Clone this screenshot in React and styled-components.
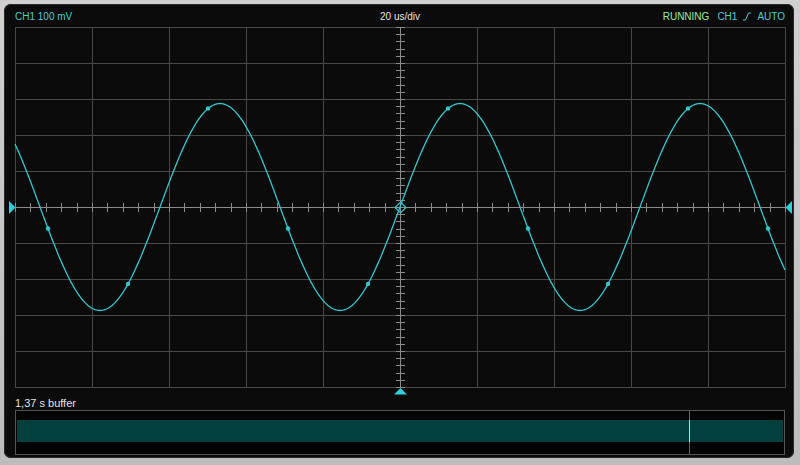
import React from 'react';
import styled, { createGlobalStyle } from 'styled-components';

const GlobalStyle = createGlobalStyle`
  html, body {
    margin: 0;
    padding: 0;
    background: #c4c4c4;
  }
  * { box-sizing: border-box; }
`;

const Frame = styled.div`
  width: 800px;
  height: 465px;
  padding: 4px 6px 7px 4px;
  background: linear-gradient(#d0d0d0, #bcbcbc);
  font-family: 'Liberation Sans', Arial, sans-serif;
`;

const Panel = styled.div`
  height: 100%;
  display: flex;
  flex-direction: column;
  background: #0b0b0b;
  border-radius: 7px;
  box-shadow: inset 0 0 0 1px #2a2a2a;
  overflow: hidden;
`;

const Header = styled.div`
  height: 22px;
  padding: 6px 9px 0 11px;
  display: grid;
  grid-template-columns: 1fr auto 1fr;
  align-items: start;
  font-size: 10px;
  line-height: 13px;
`;

const Label = styled.span`
  color: ${p => p.color || '#e6e6e6'};
  white-space: nowrap;
`;

const Status = styled.div`
  justify-self: end;
  display: flex;
  align-items: center;
  gap: 6px;
  & > :first-child { margin-right: 2px; }
`;

const Scope = styled.svg`
  display: block;
  width: 790px;
  height: 370px;
  flex: none;
`;

const BufferLabel = styled.div`
  height: 14px;
  padding-left: 11px;
  font-size: 11px;
  line-height: 14px;
  color: #e2e2e2;
`;

const BufferBox = styled.div`
  position: relative;
  height: 45px;
  margin: 0 9px 0 11px;
  border: 1px solid #555;
  background: #030303;
  padding: 9px 1px 0 1px;
`;

const BufferFill = styled.div`
  height: 22px;
  background: #02403f;
`;

const Cursor = styled.div`
  position: absolute;
  top: 0;
  bottom: 0;
  left: ${p => p.x}px;
  width: 1px;
  background: #666;
  &::after {
    content: '';
    position: absolute;
    left: 0;
    top: 9px;
    height: 22px;
    width: 1px;
    background: #8fe8ee;
  }
`;

const TRACE = '#33c7cf';
const X0 = 15, X1 = 785, Y0 = 27, Y1 = 387, CX = 400, CY = 207;
const DX = 77, DY = 36;
const AMP = 103.5, PERIOD = 240;

const wave = x => CY - AMP * Math.sin((2 * Math.PI * (x - CX)) / PERIOD);

function TriggerIcon() {
  return (
    <svg width="8" height="9" viewBox="0 0 8 9">
      <polyline points="0,8 2.5,8 5.5,1 8,1" fill="none" stroke="#4ecbd1" strokeWidth="1" />
    </svg>
  );
}

function Graticule() {
  const v = [];
  for (let i = 0; i <= 10; i++) v.push(X0 + i * DX);
  const h = [];
  for (let i = 0; i <= 10; i++) h.push(Y0 + i * DY);
  const xt = [];
  for (let i = 0; i <= 50; i++) xt.push(X0 + (i * DX) / 5);
  const yt = [];
  for (let i = 0; i <= 50; i++) yt.push(Y0 + (i * DY) / 5);

  let d = '';
  for (let x = X0; x <= X1; x += 1) {
    d += `${x === X0 ? 'M' : 'L'}${x},${wave(x).toFixed(2)} `;
  }
  const dots = [];
  for (let k = 0; k < 10; k++) dots.push(48 + k * 80);

  return (
    <g transform="translate(-4,-26)">
      <g stroke="#474747" strokeWidth="1" shapeRendering="crispEdges">
        {v.map(x => <line key={'v' + x} x1={x + 0.5} y1={Y0} x2={x + 0.5} y2={Y1 + 1} />)}
        {h.map(y => <line key={'h' + y} x1={X0} y1={y + 0.5} x2={X1 + 1} y2={y + 0.5} />)}
      </g>
      <g stroke="#8a8a8a" strokeWidth="1" shapeRendering="crispEdges">
        <line x1={X0} y1={CY + 0.5} x2={X1 + 1} y2={CY + 0.5} />
        <line x1={CX + 0.5} y1={Y0} x2={CX + 0.5} y2={Y1 + 1} />
        {xt.map(x => (
          <line key={'xt' + x} x1={Math.round(x) + 0.5} y1={CY - 4} x2={Math.round(x) + 0.5} y2={CY + 5} />
        ))}
        {yt.map(y => (
          <line key={'yt' + y} x1={CX - 4} y1={Math.round(y) + 0.5} x2={CX + 5} y2={Math.round(y) + 0.5} />
        ))}
      </g>
      <path d={d} fill="none" stroke={TRACE} strokeWidth="1.3" />
      {dots.map(x => <circle key={'d' + x} cx={x} cy={wave(x)} r="2.2" fill={TRACE} />)}
      <polygon points={`${CX + 0.5},${CY - 5} ${CX + 6},${CY + 0.5} ${CX + 0.5},${CY + 6} ${CX - 5},${CY + 0.5}`}
        fill="none" stroke={TRACE} strokeWidth="1.2" />
      <g fill="#2fd0dc">
        <polygon points={`9,201 15.5,207.5 9,214`} />
        <polygon points={`792,201 785.5,207.5 792,214`} />
        <polygon points={`400.5,388 394,394.5 407,394.5`} />
      </g>
    </g>
  );
}

export default function App() {
  return (
    <>
      <GlobalStyle />
      <Frame>
        <Panel>
          <Header>
            <Label color="#4ecbd1">CH1 100 mV</Label>
            <Label>20 us/div</Label>
            <Status>
              <Label color="#9ee6a0">RUNNING</Label>
              <Label color="#4ecbd1">CH1</Label>
              <TriggerIcon />
              <Label color="#4ecbd1">AUTO</Label>
            </Status>
          </Header>
          <Scope viewBox="0 0 790 370">
            <Graticule />
          </Scope>
          <BufferLabel>1,37 s buffer</BufferLabel>
          <BufferBox>
            <BufferFill />
            <Cursor x={673} />
          </BufferBox>
        </Panel>
      </Frame>
    </>
  );
}
